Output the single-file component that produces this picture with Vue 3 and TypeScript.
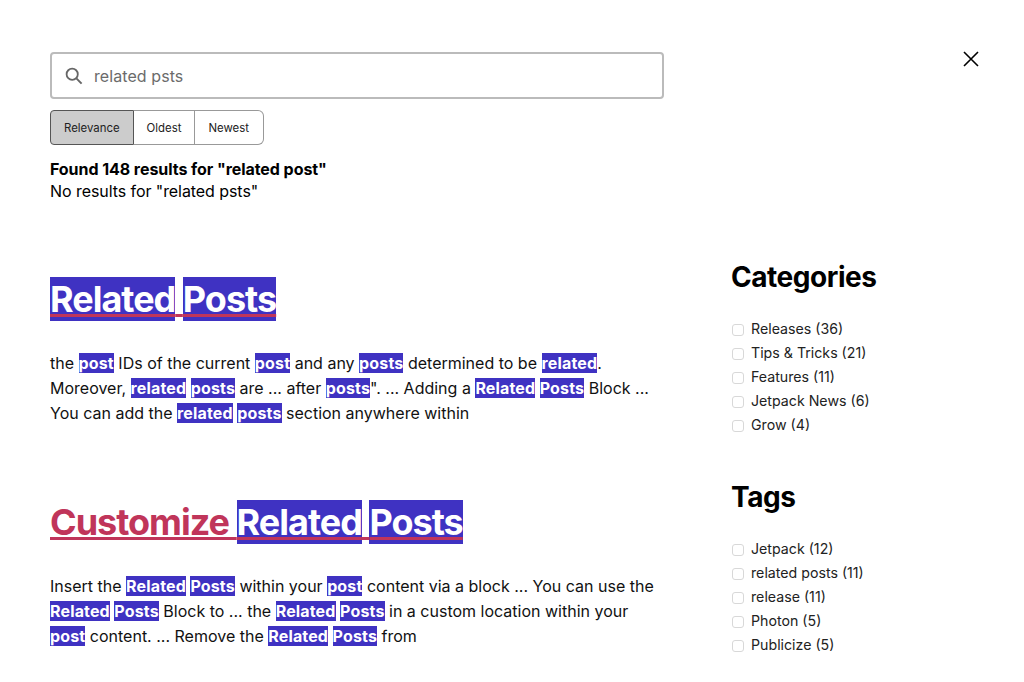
<template>
  <div class="page">
    <button class="close" type="button" aria-label="Close">
      <svg width="24" height="24" viewBox="0 0 24 24">
        <path d="M5 5l14 14M19 5L5 19" fill="none" stroke="#000" stroke-width="1.6" />
      </svg>
    </button>

    <header class="top">
      <label class="search">
        <svg class="search-icon" width="24" height="24" viewBox="0 0 24 24">
          <circle cx="10.2" cy="10.2" r="5.6" fill="none" stroke="#666" stroke-width="1.8" />
          <path d="M14.4 14.4l5.2 5.2" fill="none" stroke="#666" stroke-width="2" />
        </svg>
        <input value="related psts" />
      </label>

      <div class="sort">
        <button
          v-for="s in sorts"
          :key="s"
          type="button"
          :class="{ active: s === sort }"
          @click="sort = s"
        >
          {{ s }}
        </button>
      </div>

      <div class="counts">
        <b>Found 148 results for "related post"</b>
        <div>No results for "related psts"</div>
      </div>
    </header>

    <div class="body">
      <main class="results">
        <article v-for="r in results" :key="r.title" class="result">
          <h2>
            <a href="#" @click.prevent>
              <template v-for="(p, i) in split(r.title)" :key="i">
                <mark v-if="p.hit">{{ p.text }}</mark><template v-else>{{ p.text }}</template>
              </template>
            </a>
          </h2>
          <p v-for="line in r.lines" :key="line">
            <template v-for="(p, i) in split(line)" :key="i">
              <mark v-if="p.hit">{{ p.text }}</mark><template v-else>{{ p.text }}</template>
            </template>
          </p>
        </article>
      </main>

      <aside class="side">
        <section v-for="g in filters" :key="g.name" class="filter">
          <h3>{{ g.name }}</h3>
          <label v-for="o in g.options" :key="o" class="option">
            <input type="checkbox" />
            <span>{{ o }}</span>
          </label>
        </section>
      </aside>
    </div>
  </div>
</template>

<script setup lang="ts">
import { ref } from 'vue'

const sorts = ['Relevance', 'Oldest', 'Newest']
const sort = ref('Relevance')

const results = [
  {
    title: 'Related Posts',
    lines: [
      'the post IDs of the current post and any posts determined to be related.',
      'Moreover, related posts are ... after posts". ... Adding a Related Posts Block ...',
      'You can add the related posts section anywhere within',
    ],
  },
  {
    title: 'Customize Related Posts',
    lines: [
      'Insert the Related Posts within your post content via a block ... You can use the',
      'Related Posts Block to ... the Related Posts in a custom location within your',
      'post content. ... Remove the Related Posts from',
    ],
  },
]

const filters = [
  {
    name: 'Categories',
    options: ['Releases (36)', 'Tips & Tricks (21)', 'Features (11)', 'Jetpack News (6)', 'Grow (4)'],
  },
  {
    name: 'Tags',
    options: ['Jetpack (12)', 'related posts (11)', 'release (11)', 'Photon (5)', 'Publicize (5)'],
  },
]

// only the result text gets highlighted, the filters stay plain
function split(text: string) {
  return text
    .split(/(related|posts?)/i)
    .filter((t) => t !== '')
    .map((t) => ({ text: t, hit: /^(related|posts?)$/i.test(t) }))
}
</script>

<style>
html,
body {
  margin: 0;
  background: #fff;
}
</style>

<style scoped>
.page {
  position: relative;
  height: 682px;
  overflow: hidden;
  box-sizing: border-box;
  padding: 52px 44px 0 50px;
  font-family: Inter, "Liberation Sans", sans-serif;
  font-size: 16px;
  color: #111;
}

.close {
  position: absolute;
  top: 47px;
  left: 959px;
  padding: 0;
  width: 24px;
  height: 24px;
  border: none;
  background: none;
}

.top {
  width: 614px;
}

.search {
  display: flex;
  align-items: center;
  gap: 8px;
  box-sizing: border-box;
  height: 47px;
  padding: 0 10px;
  border: 2px solid #bbb;
  border-radius: 4px;
}

.search-icon {
  flex: none;
}

.search input {
  flex: 1;
  border: none;
  outline: none;
  padding: 0;
  font: inherit;
  letter-spacing: 0.08px;
  color: #6b6b6b;
}

.sort {
  display: inline-flex;
  margin-top: 11px;
  vertical-align: top;
}

.sort button {
  box-sizing: border-box;
  height: 35px;
  padding: 0 13px;
  border: 1px solid #999;
  border-left: none;
  background: #fff;
  font: inherit;
  font-size: 11.4px;
  color: #222;
}

.sort button:first-child {
  border-left: 1px solid #555;
  border-color: #555;
  border-radius: 4px 0 0 4px;
}

.sort button:last-child {
  padding-right: 14px;
  border-radius: 0 6px 6px 0;
}

.sort button.active {
  background: #ccc;
}

.counts {
  margin-top: 13px;
  line-height: 22px;
  letter-spacing: -0.07px;
  color: #000;
}

.counts b {
  font-weight: 700;
  letter-spacing: -0.06px;
}

.body {
  display: flex;
  justify-content: space-between;
  margin-top: 53px;
}

.results {
  width: 613px;
  padding-top: 22px;
}

.result {
  margin-bottom: 74px;
}

.result h2 {
  margin: 0 0 30px;
  font-size: 36px;
  font-weight: 700;
  line-height: 44px;
  letter-spacing: -1px;
}

.result h2 a {
  color: #c0355a;
  text-decoration: underline;
  text-decoration-thickness: 3px;
}

.result p {
  margin: 0;
  line-height: 25px;
}

mark {
  background: #3f32c2;
  color: #fff;
  font-weight: 700;
}

.result p mark {
  letter-spacing: 0.15px;
}

.side {
  width: 249px;
}

.filter {
  margin-bottom: 39px;
}

.filter h3 {
  margin: 0 0 17px;
  font-size: 28px;
  font-weight: 700;
  line-height: 44px;
  letter-spacing: -0.45px;
  color: #000;
}

.option {
  display: flex;
  align-items: center;
  gap: 7px;
  height: 24px;
  font-size: 14.2px;
  color: #222;
}

.option input {
  appearance: none;
  box-sizing: border-box;
  width: 12px;
  height: 12px;
  margin: 4px 0 0 1px;
  border: 1px solid #d8d8d8;
  border-radius: 3px;
  background: #fff;
}
</style>
